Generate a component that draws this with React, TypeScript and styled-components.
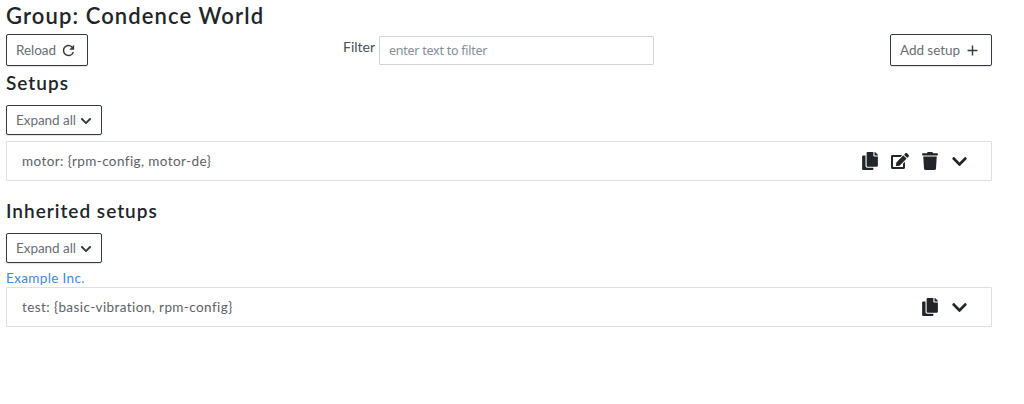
import React from 'react';
import styled, { createGlobalStyle } from 'styled-components';
import { MdRefresh, MdAdd } from 'react-icons/md';
import { FaCopy, FaChevronDown, FaTrash, FaEdit } from 'react-icons/fa';

const GlobalStyle = createGlobalStyle`
  * { box-sizing: border-box; }
  body {
    margin: 0;
    background: #fff;
    color: #212529;
    font-family: Lato, "Noto Sans", sans-serif;
  }
`;

const Page = styled.main`
  width: 992px;
  padding: 4px 0 0 6px;
`;

const Title = styled.h1`
  margin: 0;
  height: 30px;
  font-size: 22px;
  line-height: 24px;
  font-weight: 600;
  letter-spacing: 1.1px;
`;

const Heading = styled.h2`
  margin: 0;
  height: 39px;
  font-size: 19px;
  line-height: 34px;
  font-weight: 600;
  letter-spacing: 1px;
`;

const Toolbar = styled.div`
  display: flex;
  height: 32px;
`;

const Button = styled.button<{ $width: number; $height?: number; $gap?: number }>`
  display: flex;
  align-items: center;
  gap: ${(p) => p.$gap ?? 4}px;
  width: ${(p) => p.$width}px;
  height: ${(p) => p.$height ?? 32}px;
  padding: 0 0 1px 9px;
  border: 1px solid #343a40;
  border-radius: 2px;
  background: #fff;
  color: #6a6e72;
  font: 400 13.5px/16px Lato, sans-serif;
  letter-spacing: -0.05px;
  white-space: nowrap;
  box-shadow: 0 1px 1px rgba(0, 0, 0, 0.12);

  svg { color: #343a40; flex: none; margin-top: 2px; }
`;

const Filter = styled.label`
  display: flex;
  justify-content: space-between;
  width: 311px;
  margin: 0 auto 0 255px;
  font-size: 14px;
  line-height: 26px;
  color: #495057;
`;

const Input = styled.input`
  width: 275px;
  height: 29px;
  margin-top: 2px;
  padding: 0 9px;
  border: 1px solid #ced4da;
  border-radius: 1px;
  font: 400 12.5px "Noto Sans", sans-serif;
  letter-spacing: -0.25px;
  &::placeholder { color: #868e96; opacity: 1; }
`;

const Card = styled.article`
  display: flex;
  align-items: center;
  justify-content: space-between;
  height: 40px;
  margin-top: 6px;
  padding: 0 23px 0 15px;
  border: 1px solid #dfdfdf;
  border-radius: 1px;
  color: #5d6267;
  font-size: 13.5px;
  letter-spacing: 0.41px;
`;

const Actions = styled.div`
  display: flex;
  align-items: center;
  gap: 12px;
  color: #212529;
  svg { display: block; }
`;

const Section = styled.section`
  & + & { margin-top: 13px; }
`;

const GroupLink = styled.a`
  display: block;
  height: 24px;
  margin-bottom: -6px;
  padding-top: 5px;
  color: #3b8ade;
  font-size: 13.5px;
  line-height: 20px;
  letter-spacing: 0.35px;
`;

const ExpandButton = () => (
  <Button $width={96} $height={30} $gap={4}>
    Expand all <FaChevronDown size={12} />
  </Button>
);

export default function App() {
  return (
    <>
      <GlobalStyle />
      <Page>
        <Title>Group: Condence World</Title>
        <Toolbar>
          <Button $width={82}>Reload <MdRefresh size={17} /></Button>
          <Filter>
            Filter
            <Input placeholder="enter text to filter" />
          </Filter>
          <Button $width={102}>Add setup <MdAdd size={17} /></Button>
        </Toolbar>
        <Section>
          <Heading>Setups</Heading>
          <ExpandButton />
          <Card>
            motor: {'{rpm-config, motor-de}'}
            <Actions>
              <FaCopy size={18} />
              <FaEdit size={18} />
              <FaTrash size={18} />
              <FaChevronDown size={17} />
            </Actions>
          </Card>
        </Section>
        <Section>
          <Heading>Inherited setups</Heading>
          <ExpandButton />
          <GroupLink>Example Inc.</GroupLink>
          <Card>
            test: {'{basic-vibration, rpm-config}'}
            <Actions>
              <FaCopy size={18} />
              <FaChevronDown size={17} />
            </Actions>
          </Card>
        </Section>
      </Page>
    </>
  );
}
